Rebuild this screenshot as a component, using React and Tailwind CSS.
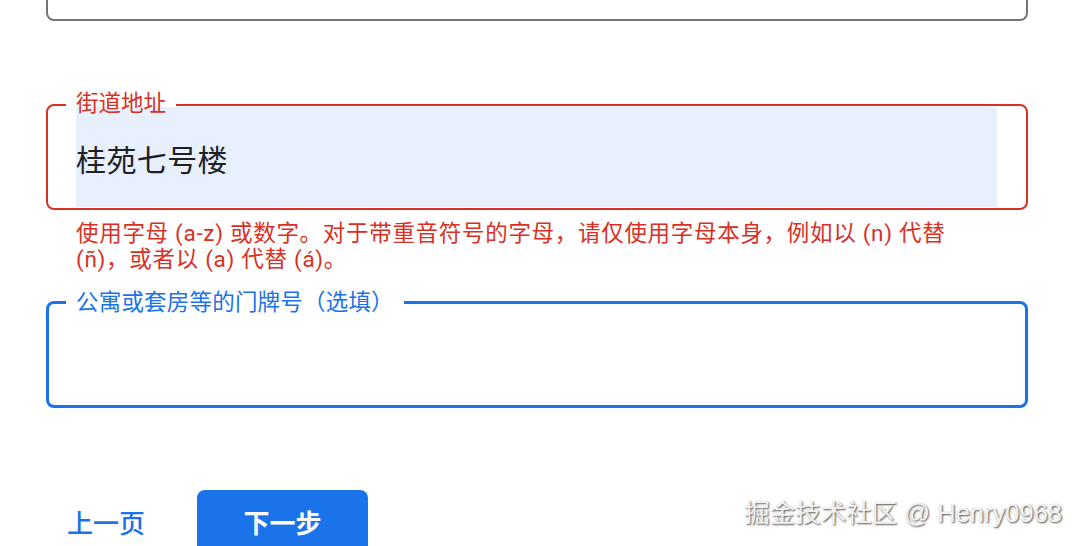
export default function App() {
  const font = { fontFamily: 'Roboto, "Noto Sans CJK SC", sans-serif' };
  return (
    <div className="relative h-[546px] w-full overflow-hidden bg-white" style={font}>
      <div className="ml-[46px] w-[982px]">
        {/* previous field (cut off) */}
        <div className="h-[21px] rounded-b-[8px] border-x-2 border-b-2 border-[#757575]" />

        {/* street address field (error + autofill) */}
        <div className="relative mt-[83px] h-[106px] rounded-[8px] border-2 border-[#d93025]">
          <span className="absolute left-[18px] top-[-15px] bg-[linear-gradient(#ffffff_66%,transparent_66%)] px-[10px] text-[22.5px] leading-[24px] text-[#d93025]">
            街道地址
          </span>
          <div className="ml-[28px] mr-[29px] mt-[1px] flex h-[100px] items-center bg-[#e8f0fe] pt-[6px] text-[30px] tracking-[0.4px] text-[#202124]">
            桂苑七号楼
          </div>
        </div>

        {/* error message */}
        <div className="mt-[10px] pl-[30px] text-[22.5px] leading-[26px] tracking-[0.7px] text-[#d93025]">
          <div className="whitespace-nowrap">使用字母 (a-z) 或数字。对于带重音符号的字母，请仅使用字母本身，例如以 (n) 代替</div>
          <div className="whitespace-nowrap">(ñ)，或者以 (a) 代替 (á)。</div>
        </div>

        {/* apartment field (focused) */}
        <div className="relative mt-[29px] h-[107px] rounded-[8px] border-[3px] border-[#1a73e8]">
          <span className="absolute left-[17px] top-[-14px] bg-white px-[10px] text-[22.5px] leading-[24px] tracking-[0.2px] text-[#1a73e8]">
            公寓或套房等的门牌号（选填）
          </span>
        </div>

        {/* buttons */}
        <div className="mt-[82px] flex items-start gap-[31px]">
          <button className="flex h-[68px] items-center px-[21px] text-[26px] font-medium text-[#1a73e8]">
            上一页
          </button>
          <button className="flex h-[68px] w-[171px] items-center justify-center rounded-[8px] bg-[#1a73e8] text-[26px] font-bold text-white">
            下一步
          </button>
        </div>
      </div>

      {/* watermark */}
      <div
        className="absolute right-[18px] top-[498px] whitespace-nowrap text-[25.5px] leading-[30px] text-[#f2f2f2] [text-shadow:1px_1px_2px_rgba(0,0,0,0.7)]"
        style={{ fontFamily: '"Liberation Sans", "Noto Sans CJK SC", sans-serif' }}
      >
        掘金技术社区 @ Henry0968
      </div>
    </div>
  );
}
